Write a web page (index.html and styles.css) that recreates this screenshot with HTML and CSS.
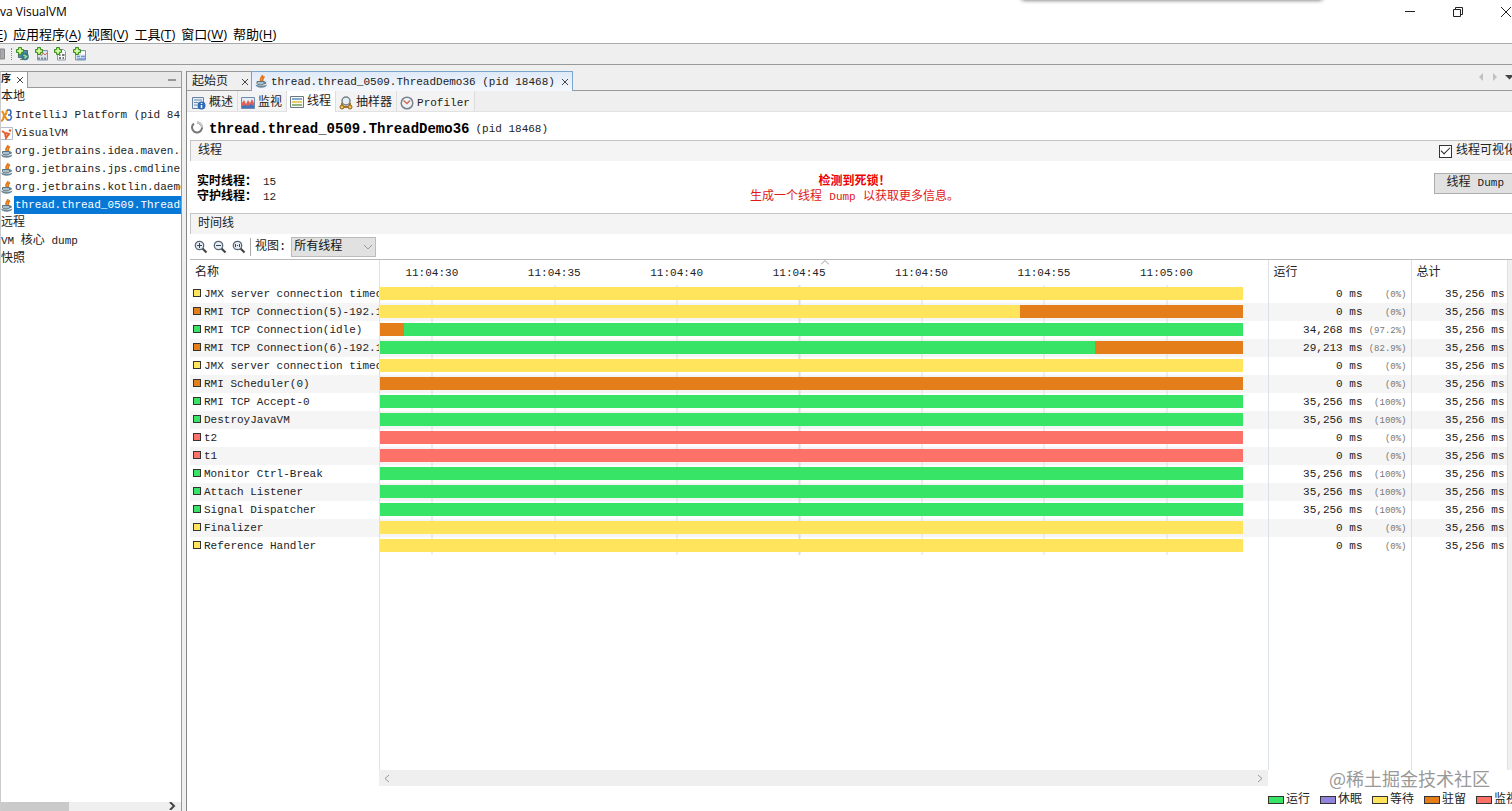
FILE: index.html
```html
<!doctype html>
<html lang="zh-CN">
	<head>
		<meta charset="utf-8">
		<title>Java VisualVM</title>
		<link rel="stylesheet" href="styles.css">
	</head>
	<body>
		<svg class="defs" aria-hidden="true">
			<symbol id="java" viewBox="0 0 12 13">
				<path d="M6.500 0C8 2 3.500 3 5.500 6M9 1.500C6 3.500 8 4 6.800 6.500" fill="none" stroke="#e07818" stroke-width="1.800"/>
				<path d="M1.500 6.500h7v2Q8.500 10 5 10T1.500 8.500zM8.500 7h1.500q1.500 1.500-1.500 2" fill="#a9bfca" stroke="#597486"/>
				<path d="M0 9.500q6 2.500 11.500 0-1 3.300-5.800 3.300T0 9.500z" fill="#6d8999"/>
			</symbol>
			<symbol id="plus" viewBox="0 0 13 14">
				<path d="M2.500 3.500h10v9.500h-10z" fill="#dbe4ec" stroke="#8293a4"/>
			</symbol>
			<symbol id="cross" viewBox="0 0 13 14">
				<path d="M2.500.5h3v2h2v3h-2v2h-3v-2h-2v-3h2z" fill="#a5e860" stroke="#3f8a28"/>
				<path d="M4 2v4M2 4h4" stroke="#e8ffc8"/>
			</symbol>
			<symbol id="lens" viewBox="0 0 14 14">
				<path d="M8.500 8.500l4 4" stroke="#444" stroke-width="2.200"/>
				<circle cx="5.500" cy="5.500" r="4.200" fill="#e6edf5" stroke="#5b6675" stroke-width="1.300"/>
			</symbol>
		</svg>

		<div class="window">
			<div class="popup-edge"></div>
			<header class="titlebar">
				<span>va VisualVM</span>
				<div class="window-buttons">
					<button aria-label="最小化"><svg width="12" height="12" viewBox="0 0 12 12"><path d="M1 5.500h10"/></svg></button>
					<button aria-label="还原"><svg width="12" height="12" viewBox="0 0 12 12"><path d="M1.500 3.500h7v7h-7zM3.500 3V1.500h7v7H9"/></svg></button>
					<button aria-label="关闭"><svg width="12" height="12" viewBox="0 0 12 12"><path d="M1 1l10 10M11 1L1 11"/></svg></button>
				</div>
			</header>
			<nav class="menubar">
				<a href="#"><u>E</u>)</a>
				<a href="#">应用程序(<u>A</u>)</a>
				<a href="#">视图(<u>V</u>)</a>
				<a href="#">工具(<u>T</u>)</a>
				<a href="#">窗口(<u>W</u>)</a>
				<a href="#">帮助(<u>H</u>)</a>
			</nav>
			<div class="toolbar">
				<svg width="5" height="13"><path d="M0 1h4.500v10H0z" fill="#a6a9ad" stroke="#888"/></svg>
				<span class="grip"></span>
				<button aria-label="添加 JMX 连接"><svg width="13" height="14"><path d="M2.500 3.500h9v7h-9z" fill="#4f93ad" stroke="#4d6470"/><path d="M4 12.500h5" stroke="#777"/><circle cx="9" cy="9.500" r="3.800" fill="#357a86"/><path d="M7.500 8l3 1.500-2 2" stroke="#a4dc9d" stroke-width="1.500" fill="none"/><use href="#cross"/></svg></button>
				<button aria-label="添加核心 dump"><svg width="13" height="14"><use href="#plus"/><path d="M6 9l2-3 2 2 2-2" stroke="#cd6a57" fill="none"/><path d="M3 11.500h9" stroke="#7b8794" stroke-width="2" stroke-dasharray="2 1"/><use href="#cross"/></svg></button>
				<button aria-label="添加快照"><svg width="13" height="14"><path d="M3.500 2.500h6l2 2v8.500h-8z" fill="#f5f7f8" stroke="#8d99a3"/><path d="M5 8h1.500m1.500 0h2.500m-5.500 3h2m1.500 0h1.500" stroke="#777" stroke-width="1.800"/><use href="#cross"/></svg></button>
				<button aria-label="应用程序快照"><svg width="13" height="14"><use href="#plus"/><path d="M8 6h4" stroke="#fff" stroke-width="3"/><path d="M4 9.500h3m1 0h4M4 12h8" stroke="#6e95d6" stroke-width="1.500"/><use href="#cross"/></svg></button>
			</div>

			<div class="workspace">
				<aside class="sidebar">
					<div class="side-tabs">
						<span class="side-tab">序 <button aria-label="关闭"><svg width="8" height="8"><path d="M1 1l6 6M7 1L1 7"/></svg></button></span>
						<button class="collapse" aria-label="最小化窗口组"><svg width="8" height="8"><path d="M0 4h8"/></svg></button>
					</div>
					<ul class="tree">
						<li class="cjk">本地</li>
						<li><svg width="12" height="13"><path d="M0 12C5 10 0 7 5 5L6 1M1 2l5 9" fill="none" stroke="#e98c18" stroke-width="2"/><path d="M6 1h3q2 2 0 5 3 2 0 5H6M7 6h2" fill="none" stroke="#3869bd" stroke-width="1.500"/></svg><a href="#">IntelliJ Platform (pid 847</a></li>
						<li><svg width="12" height="13"><path d="M0 .5h11.500v12H0" fill="#fff" stroke="#b5bdc8"/><path d="M1 4l3 2 1 5 3-4-3-1M8 3l2 1" fill="none" stroke="#e4602d" stroke-width="2"/></svg><a href="#">VisualVM</a></li>
						<li><svg width="12" height="13"><use href="#java"/></svg><a href="#">org.jetbrains.idea.maven.s</a></li>
						<li><svg width="12" height="13"><use href="#java"/></svg><a href="#">org.jetbrains.jps.cmdline.</a></li>
						<li><svg width="12" height="13"><use href="#java"/></svg><a href="#">org.jetbrains.kotlin.daemo</a></li>
						<li class="selected"><svg width="12" height="13"><use href="#java"/></svg><a href="#">thread.thread_0509.ThreadD</a></li>
						<li class="cjk">远程</li>
						<li>VM <span class="cjk">核心</span> dump</li>
						<li class="cjk">快照</li>
					</ul>
					<div class="side-scroll"><span class="thumb"></span><svg width="8" height="8"><path d="M2 0l4 4-4 4"/></svg></div>
				</aside>

				<main class="main">
					<div class="doc-tabs">
						<div class="doc-tab"><span class="cjk">起始页</span><button aria-label="关闭"><svg width="8" height="8"><path d="M1 1l6 6M7 1L1 7"/></svg></button></div>
						<div class="doc-tab active"><svg class="java" width="13" height="13"><use href="#java"/></svg><span>thread.thread_0509.ThreadDemo36 (pid 18468)</span><button aria-label="关闭"><svg width="8" height="8"><path d="M1 1l6 6M7 1L1 7"/></svg></button></div>
						<svg class="tab-nav" width="35" height="10"><path d="M5 1v8L1 5z" fill="#c0c0c0"/><path d="M15 1v8l4-4z" fill="#c0c0c0"/><path d="M27 3h9l-4.500 4.500z" fill="#444"/></svg>
					</div>
					<nav class="views">
						<a href="#"><svg width="14" height="14"><path d="M.5 1.500h11v11H.5z" fill="#e5edf7" stroke="#6681a2"/><path d="M2 4h8M2 6.500h4M2 9h3" stroke="#718caf"/><circle cx="9.500" cy="9.500" r="4" fill="#2f6ab4"/><path d="M9.500 9v3m0-5v1" stroke="#fff" stroke-width="1.500"/></svg>概述</a>
						<a href="#"><svg width="14" height="14"><path d="M.5 1.500h13v11H.5z" fill="#e5edf7" stroke="#6c8bad"/><path d="M1 12V7l2-3 2 4 2-4 2 3 2-4 2 4v5z" fill="#df6157"/><path d="M1 12v-2l3-1 3 1 3-2 3 2v2z" fill="#4475bb"/></svg>监视</a>
						<a href="#" class="current"><svg width="14" height="14"><path d="M.5 1.500h13v11H.5z" fill="#f9faf5" stroke="#6b7782"/><path d="M2 4h10" stroke="#5c8fc0" stroke-width="1.500"/><path d="M2 7h10" stroke="#dfbf3c" stroke-width="1.500"/><path d="M2 10h10" stroke="#71a35a" stroke-width="1.500"/></svg>线程</a>
						<a href="#"><svg width="14" height="14"><circle cx="7" cy="5" r="4" fill="#e5eef5" stroke="#77818a" stroke-width="1.500"/><path d="M3 7v3m8-3v3M4 11h6" stroke="#a67828" stroke-width="2"/><circle cx="3" cy="11" r="2" fill="#f3c158" stroke="#8c6323"/><circle cx="11" cy="11" r="2" fill="#f3c158" stroke="#8c6323"/></svg>抽样器</a>
						<a href="#" class="latin"><svg width="14" height="14"><circle cx="7" cy="7" r="5.800" fill="#edf3f7" stroke="#79838d" stroke-width="1.500"/><path d="M3.500 4.500L7 7.500l3-3" fill="none" stroke="#d36d55" stroke-width="1.500"/></svg>Profiler</a>
					</nav>

					<h1 class="process"><svg width="12" height="13"><path d="M3 2.500a5 5 0 1 0 3-1" fill="none" stroke="#777" stroke-width="2"/><path d="M6 1.500a5 5 0 0 1 5 5" fill="none" stroke="#ccc" stroke-width="2"/></svg><b>thread.thread_0509.ThreadDemo36</b><span>(pid 18468)</span></h1>

					<div class="section">
						<h2>线程</h2>
						<label class="visual"><input type="checkbox" checked>线程可视化</label>
					</div>
					<div class="summary">
						<dl>
							<div><dt>实时线程：</dt><dd>15</dd></div>
							<div><dt>守护线程：</dt><dd>12</dd></div>
						</dl>
						<p class="deadlock"><b>检测到死锁！</b><br>生成一个线程 <span class="latin">Dump</span> 以获取更多信息。</p>
						<button class="dump">线程 <span class="latin">Dump</span></button>
					</div>
					<div class="section"><h2>时间线</h2></div>
					<div class="timeline-tools">
						<button aria-label="放大"><svg width="14" height="14"><use href="#lens"/><path d="M3 5.500h5M5.500 3v5" stroke="#345"/></svg></button>
						<button aria-label="缩小"><svg width="14" height="14"><use href="#lens"/><path d="M3 5.500h5" stroke="#345"/></svg></button>
						<button aria-label="适合窗口"><svg width="14" height="14"><use href="#lens"/><path d="M3.500 4v3M7.500 4v3M5 5.500h1" stroke="#345"/></svg></button>
						<label for="view">视图:</label>
						<div class="picker"><select id="view"><option>所有线程</option></select><svg width="10" height="6"><path d="M1 1l4 4 4-4"/></svg></div>
					</div>

					<div class="table-wrap">
						<svg class="sort" width="8" height="5"><path d="M0 4.500l4-4 4 4"/></svg>
						<table class="threads">
							<colgroup><col class="c-name"><col><col class="c-run"><col class="c-total"><col class="c-scroll"></colgroup>
							<thead>
								<tr>
									<th>名称</th>
									<th class="times"><div><time>11:04:30</time><time>11:04:35</time><time>11:04:40</time><time>11:04:45</time><time>11:04:50</time><time>11:04:55</time><time>11:05:00</time></div></th>
									<th>运行</th><th>总计</th><th></th>
								</tr>
							</thead>
							<tbody>
								<tr><td><i class="wait"></i>JMX server connection timeo</td><td><div class="bar wait"></div></td><td>0 ms<small>(0%)</small></td><td>35,256 ms</td><td></td></tr>
								<tr><td><i class="park"></i>RMI TCP Connection(5)-192.1</td><td><div class="bar park"><div class="wait" style="width: 74.2%"></div></div></td><td>0 ms<small>(0%)</small></td><td>35,256 ms</td><td></td></tr>
								<tr><td><i class="run"></i>RMI TCP Connection(idle)</td><td><div class="bar run"><div class="park" style="width: 2.8%"></div></div></td><td>34,268 ms<small>(97.2%)</small></td><td>35,256 ms</td><td></td></tr>
								<tr><td><i class="park"></i>RMI TCP Connection(6)-192.1</td><td><div class="bar park"><div class="run" style="width: 82.9%"></div></div></td><td>29,213 ms<small>(82.9%)</small></td><td>35,256 ms</td><td></td></tr>
								<tr><td><i class="wait"></i>JMX server connection timeo</td><td><div class="bar wait"></div></td><td>0 ms<small>(0%)</small></td><td>35,256 ms</td><td></td></tr>
								<tr><td><i class="park"></i>RMI Scheduler(0)</td><td><div class="bar park"></div></td><td>0 ms<small>(0%)</small></td><td>35,256 ms</td><td></td></tr>
								<tr><td><i class="run"></i>RMI TCP Accept-0</td><td><div class="bar run"></div></td><td>35,256 ms<small>(100%)</small></td><td>35,256 ms</td><td></td></tr>
								<tr><td><i class="run"></i>DestroyJavaVM</td><td><div class="bar run"></div></td><td>35,256 ms<small>(100%)</small></td><td>35,256 ms</td><td></td></tr>
								<tr><td><i class="monitor"></i>t2</td><td><div class="bar monitor"></div></td><td>0 ms<small>(0%)</small></td><td>35,256 ms</td><td></td></tr>
								<tr><td><i class="monitor"></i>t1</td><td><div class="bar monitor"></div></td><td>0 ms<small>(0%)</small></td><td>35,256 ms</td><td></td></tr>
								<tr><td><i class="run"></i>Monitor Ctrl-Break</td><td><div class="bar run"></div></td><td>35,256 ms<small>(100%)</small></td><td>35,256 ms</td><td></td></tr>
								<tr><td><i class="run"></i>Attach Listener</td><td><div class="bar run"></div></td><td>35,256 ms<small>(100%)</small></td><td>35,256 ms</td><td></td></tr>
								<tr><td><i class="run"></i>Signal Dispatcher</td><td><div class="bar run"></div></td><td>35,256 ms<small>(100%)</small></td><td>35,256 ms</td><td></td></tr>
								<tr><td><i class="wait"></i>Finalizer</td><td><div class="bar wait"></div></td><td>0 ms<small>(0%)</small></td><td>35,256 ms</td><td></td></tr>
								<tr><td><i class="wait"></i>Reference Handler</td><td><div class="bar wait"></div></td><td>0 ms<small>(0%)</small></td><td>35,256 ms</td><td></td></tr>
								<tr class="filler"><td></td><td></td><td></td><td></td><td></td></tr>
							</tbody>
						</table>
					</div>
					<div class="time-scroll"><svg width="6" height="9"><path d="M5 1L1 4.500 5 8"/></svg><svg width="6" height="9"><path d="M1 1l4 3.500L1 8"/></svg></div>
					<ul class="legend">
						<li><i class="run"></i>运行</li>
						<li><i class="sleep"></i>休眠</li>
						<li><i class="wait"></i>等待</li>
						<li><i class="park"></i>驻留</li>
						<li><i class="monitor"></i>监视</li>
					</ul>
				</main>
			</div>
			<div class="watermark">@稀土掘金技术社区</div>
		</div>
	</body>
</html>
```

FILE: styles.css
```css
* {
	box-sizing: border-box;
}
body {
	margin: 0;
	font: 11px/18px "Liberation Mono", "Noto Sans CJK SC", monospace;
	color: #222;
	background: #fff;
}
button {
	border: 0;
	padding: 0;
	background: none;
	font: inherit;
	color: inherit;
	display: flex;
}
a {
	color: inherit;
	text-decoration: none;
}
ul, dl, dd, p, h1, h2 {
	margin: 0;
	padding: 0;
	list-style: none;
	font-weight: normal;
}
svg {
	flex: none;
	display: block;
}
.defs {
	position: absolute;
	width: 0;
	height: 0;
}
.cjk {
	font-size: 12px;
}
.latin {
	font-family: "Liberation Mono", monospace;
	font-size: 11px;
}

.window {
	position: relative;
	height: 100vh;
	display: flex;
	flex-direction: column;
	overflow: hidden;
}
.popup-edge {
	position: absolute;
	top: -4px;
	right: 190px;
	width: 300px;
	height: 4px;
	box-shadow: 0 0 4px #555;
}
.titlebar {
	display: flex;
	justify-content: space-between;
	height: 24px;
	font: 12px/24px "Open Sans", sans-serif;
	color: #000;
}
.window-buttons {
	display: flex;
	align-items: center;
	gap: 36px;
}
.window-buttons path {
	fill: none;
	stroke: #222;
}
.menubar {
	display: flex;
	gap: 6px;
	height: 19px;
	margin-left: -4px;
	font: 13px/20px "Open Sans", "Noto Sans CJK SC", sans-serif;
	color: #000;
}
.menubar u {
	text-underline-offset: 2px;
}
.toolbar {
	display: flex;
	align-items: center;
	gap: 6px;
	height: 22px;
	background: #efefef;
	border-top: 1px solid #aaa;
	border-bottom: 1px solid #999;
}
.grip {
	height: 12px;
	border-left: 1px dotted #888;
	margin-right: -2px;
}
.workspace {
	flex: 1;
	min-height: 0;
	display: flex;
	gap: 4px;
	padding-top: 6px;
	background: #efefef;
}

/* application tree */
.sidebar {
	flex: none;
	width: 182px;
	display: flex;
	flex-direction: column;
	background: #fff;
	border: 1px solid #999;
	border-left-color: #ccc;
	border-bottom: 0;
	overflow: hidden;
}
.side-tabs {
	display: flex;
	justify-content: space-between;
	align-items: center;
	height: 16px;
	padding-right: 5px;
	background: #e8e8e8;
	border-bottom: 1px solid #999;
}
.side-tab {
	display: flex;
	align-items: center;
	gap: 5px;
	height: 16px;
	padding-right: 3px;
	background: #fff;
	border-right: 1px solid #999;
	font-size: 10px;
	font-weight: bold;
}
.side-tabs path, .doc-tab button path {
	fill: none;
	stroke: #444;
}
.tree {
	flex: 1;
}
.tree li {
	display: flex;
	align-items: center;
	height: 18px;
	gap: 2px;
	white-space: pre;
}
.tree a {
	flex: 1;
	min-width: 0;
	padding-left: 1px;
	margin-left: -1px;
	overflow: hidden;
}
.tree li > .cjk {
	margin: 0 -2px;
}
.selected a {
	background: #0878d7;
	color: #fff;
}
.side-scroll {
	display: flex;
	justify-content: space-between;
	height: 9px;
	padding-right: 5px;
	background: #efefef;
}
.side-scroll .thumb {
	width: 68px;
	background: #cacaca;
}
.side-scroll path {
	fill: none;
	stroke: #444;
	stroke-width: 2;
}

/* document area */
.main {
	flex: 1;
	min-width: 0;
	display: flex;
	flex-direction: column;
	border-left: 1px solid #888;
	background: #fff;
	overflow: hidden;
}
.doc-tabs {
	display: flex;
	height: 20px;
	background: #efefef;
	border-bottom: 1px solid #999;
}
.doc-tab {
	display: flex;
	align-items: center;
	gap: 13px;
	padding: 2px 2px 0 5px;
	border-top: 1px solid #999;
	border-right: 1px solid #999;
	height: 19px;
}
.doc-tab.active {
	height: 20px;
	padding: 0 3px;
	gap: 6px;
	background: linear-gradient(#dfeaf8, #f4f8fe);
	border: 1px solid #7da6cc;
	border-width: 1px 1px 0 0;
}
.doc-tab .java {
	margin-right: -3px;
}
.tab-nav {
	margin: 1px -1px 0 auto;
}
.views {
	display: flex;
	height: 21px;
	padding-left: 2px;
	background: #efefef;
	border-bottom: 1px solid #e2e2e2;
	font-size: 12px;
}
.views a {
	display: flex;
	align-items: center;
	gap: 3px;
	padding: 4px 4px 0 3px;
	border-right: 1px solid #ddd;
	background: #f3f3f3;
}
.views .latin {
	font-size: 11px;
}
.views .current {
	height: 21px;
	padding-top: 0;
	background: #fff;
}
.process {
	display: flex;
	align-items: center;
	gap: 6px;
	height: 28px;
	padding: 6px 0 0 4px;
	font-size: 11px;
}
.process svg {
	margin-bottom: 4px;
}
.process b {
	font-size: 14px;
	color: #000;
}
.section {
	display: flex;
	justify-content: space-between;
	height: 21px;
	margin-left: 3px;
	padding-left: 7px;
	line-height: 20px;
	font-size: 12px;
	background: #f4f4f4;
	border-top: 1px solid #c4c4c4;
	border-left: 1px solid #c4c4c4;
}
.section h2 {
	font-size: 12px;
}
.visual {
	display: flex;
	align-items: center;
	gap: 4px;
	margin-right: -4px;
	white-space: nowrap;
}
.visual input {
	appearance: none;
	width: 13px;
	height: 13px;
	margin: 0;
	border: 1px solid #333;
	background: #fff;
	display: grid;
	place-items: center;
}
.visual input:checked::after {
	content: "";
	width: 8px;
	height: 4px;
	margin-bottom: 3px;
	border: 1px solid #222;
	border-width: 0 0 1px 1px;
	transform: rotate(-45deg);
}
.summary {
	display: grid;
	grid-template-columns: 1fr auto 1fr;
	height: 52px;
	padding: 12px 0 0 10px;
	line-height: 15px;
}
.summary dl, .deadlock {
	padding-top: 2px;
}
.summary dl div {
	display: flex;
	gap: 6px;
}
.summary dt {
	font-size: 12px;
	font-weight: bold;
	color: #000;
}
.deadlock {
	font-size: 12px;
	text-align: center;
	color: #e01818;
}
.deadlock b {
	color: #e00;
}
.dump {
	justify-self: end;
	align-items: center;
	gap: 7px;
	height: 21px;
	padding: 0 16px 0 12px;
	margin-right: -9px;
	background: #e1e1e1;
	border: 1px solid #adadad;
	font-size: 12px;
}
.timeline-tools {
	display: flex;
	align-items: center;
	gap: 5px;
	height: 25px;
	padding-left: 7px;
	font-size: 12px;
}
.timeline-tools label {
	border-left: 1px solid #aaa;
	padding-left: 4px;
	margin-left: -1px;
}
.picker {
	display: grid;
	align-items: center;
}
.picker select, .picker svg {
	grid-area: 1 / 1;
}
.picker select {
	appearance: none;
	width: 85px;
	height: 20px;
	padding: 0 2px;
	border: 1px solid #bbb;
	border-radius: 0;
	background: #e1e1e1;
	font: inherit;
	color: #111;
}
.picker svg {
	justify-self: end;
	margin-right: 3px;
	pointer-events: none;
}
.picker path, .time-scroll path, .sort path {
	fill: none;
	stroke: #999;
}

/* thread table */
.table-wrap {
	position: relative;
	flex: 1;
	min-height: 0;
	margin-left: 3px;
	border-top: 1px solid #bbb;
}
.sort {
	position: absolute;
	top: 0;
	left: 48%;
	margin-left: -4px;
}
.threads {
	width: 100%;
	height: 100%;
	table-layout: fixed;
	border-collapse: collapse;
}
.c-name {
	width: 189px;
}
.c-run {
	width: 143px;
}
.c-total {
	width: 96px;
}
.c-scroll {
	width: 5px;
}
.threads th {
	height: 25px;
	padding: 0 5px;
	font-size: 12px;
	font-weight: normal;
	text-align: left;
}
.threads .times {
	padding: 0;
	font-size: 11px;
	overflow: hidden;
}
.times div {
	display: flex;
	margin-left: -1%;
}
.times time {
	flex: none;
	width: 13.650%;
	text-align: center;
}
.threads td {
	height: 18px;
	padding: 0;
	line-height: 16px;
	white-space: nowrap;
	overflow: hidden;
}
.threads th, .threads td {
	border-right: 1px solid #dde1ea;
}
.threads th:last-child, .threads td:last-child {
	border: 0;
	background: #f0f0f0;
}
.threads tbody tr:nth-child(even) {
	background: #f5f5f5;
}
.threads td:first-child {
	padding-left: 3px;
}
.threads tbody td:nth-child(2) {
	background: repeating-linear-gradient(to right, transparent 0, transparent 5.900%, #ddd 5.900%, #ddd 6.020%, transparent 6.020%, transparent 13.780%);
}
.threads td:nth-child(3) {
	padding-right: 4px;
	text-align: right;
}
.threads td:nth-child(4) {
	padding-right: 2px;
	text-align: right;
}
.threads small {
	display: inline-block;
	width: 44px;
	font-size: 9px;
	line-height: 12px;
	color: #777;
}
/* empty space below the last thread */
.threads tbody tr.filler, .threads tbody .filler td:nth-child(2) {
	background: none;
}
.threads .filler td {
	height: auto;
}
td i {
	display: inline-block;
	width: 8px;
	height: 8px;
	margin-right: 3px;
	border: 1px solid #333;
}
.bar {
	width: 97.200%;
	height: 13px;
	margin-bottom: 1px;
}
.bar div {
	height: 100%;
}
.run {
	background: #38e465;
}
.sleep {
	background: #9184dc;
}
.wait {
	background: #ffe45c;
}
.park {
	background: #e37e1b;
}
.monitor {
	background: #fd7268;
}
.time-scroll {
	display: flex;
	justify-content: space-between;
	align-items: center;
	height: 16px;
	margin: 0 244px 0 192px;
	padding: 0 5px;
	background: #efefef;
}
.legend {
	display: flex;
	justify-content: flex-end;
	gap: 10px;
	height: 25px;
	margin-right: -6px;
	padding-top: 3px;
	font-size: 12px;
	line-height: 22px;
}
.legend li {
	display: flex;
	flex: none;
	align-items: center;
	gap: 2px;
}
.legend i {
	width: 16px;
	height: 8px;
	border: 1px solid #333;
}
.watermark {
	position: absolute;
	right: 22px;
	bottom: 20px;
	font: 18px/26px "Noto Sans CJK SC", sans-serif;
	color: #999;
	text-shadow: 1px 1px #fff;
}
```
